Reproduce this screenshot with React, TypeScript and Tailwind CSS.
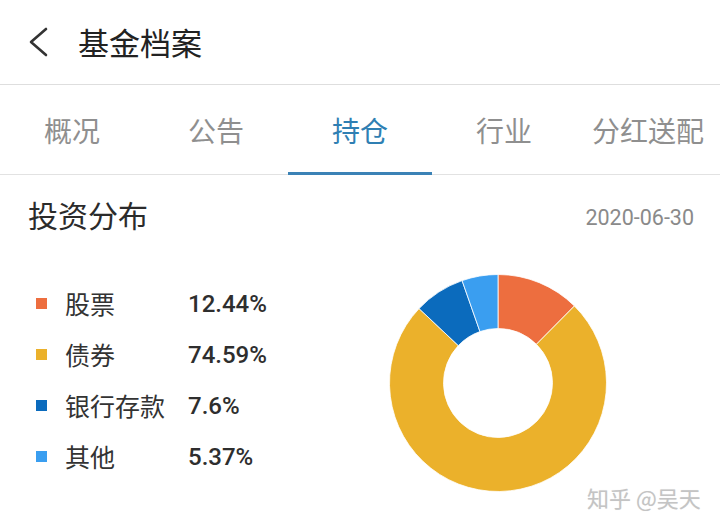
import React from "react";

const cjk = { fontFamily: '"Noto Sans CJK SC", "Noto Sans", sans-serif' };
const latin = { fontFamily: 'Roboto, "Noto Sans CJK SC", sans-serif' };

const data = [
  { label: "股票", value: "12.44%", v: 12.44, color: "#ed6e3f" },
  { label: "债券", value: "74.59%", v: 74.59, color: "#ebb12b" },
  { label: "银行存款", value: "7.6%", v: 7.6, color: "#0b6bbd" },
  { label: "其他", value: "5.37%", v: 5.37, color: "#3a9ef0" },
];

function arcPath(cx: number, cy: number, R: number, r: number, a0: number, a1: number) {
  const t0 = a0 * 2 * Math.PI - Math.PI / 2;
  const t1 = a1 * 2 * Math.PI - Math.PI / 2;
  const large = a1 - a0 > 0.5 ? 1 : 0;
  const p = (rad: number, t: number) => `${cx + rad * Math.cos(t)} ${cy + rad * Math.sin(t)}`;
  return `M ${p(R, t0)} A ${R} ${R} 0 ${large} 1 ${p(R, t1)} L ${p(r, t1)} A ${r} ${r} 0 ${large} 0 ${p(r, t0)} Z`;
}

function Donut() {
  const total = data.reduce((s, d) => s + d.v, 0);
  let acc = 0;
  return (
    <svg width="218" height="218" viewBox="0 0 218 218" className="shrink-0">
      {data.map((d) => {
        const a0 = acc / total;
        acc += d.v;
        const a1 = acc / total;
        return (
          <path
            key={d.label}
            d={arcPath(109, 109, 108.5, 54.5, a0, a1)}
            fill={d.color}
            stroke="#ffffff"
            strokeWidth="0.8"
          />
        );
      })}
    </svg>
  );
}

const tabs = ["概况", "公告", "持仓", "行业", "分红送配"];

export default function App() {
  return (
    <div className="relative w-[720px] h-[529px] bg-white overflow-hidden" style={cjk}>
      {/* Header */}
      <div className="flex items-center h-[85px] border-b border-[#dedede]">
        <svg width="24" height="32" viewBox="0 0 24 32" className="ml-[27px] -mt-[1px]">
          <path d="M19 3 L4 16 L19 29" fill="none" stroke="#333333" strokeWidth="2.6" strokeLinecap="round" strokeLinejoin="round" />
        </svg>
        <div className="ml-[27px] text-[31px] leading-none text-[#222222] -mt-[2px]">基金档案</div>
      </div>

      {/* Tabs */}
      <div className="flex h-[90px] border-b border-[#e2e2e2]">
        {tabs.map((t, i) => (
          <div key={t} className="relative flex-1 flex items-center justify-center">
            <span className={`text-[28px] leading-none ${i === 2 ? "text-[#2f7fb3]" : "text-[#8f8f8f]"}`}>{t}</span>
            {i === 2 && <div className="absolute left-0 right-0 -bottom-[1px] h-[3px] bg-[#3b82b6]" />}
          </div>
        ))}
      </div>

      {/* Section header */}
      <div className="flex items-start justify-between pt-[19px] px-[28px] pr-[26px] h-[65px]">
        <div className="text-[30px] leading-[40px] text-[#2b2b2b]">投资分布</div>
        <div className="text-[21.5px] leading-[48px] text-[#8a8a8a]" style={latin}>2020-06-30</div>
      </div>

      {/* Content */}
      <div className="flex">
        <div className="w-[389px] pl-[36px] pt-[38px] flex flex-col">
          {data.map((d) => (
            <div key={d.label} className="flex items-center h-[51px]">
              <div className="w-[11px] h-[11px]" style={{ backgroundColor: d.color }} />
              <div className="ml-[18px] w-[123px] text-[25px] leading-none text-[#333333]">{d.label}</div>
              <div className="text-[24px] leading-none font-medium text-[#2e2e2e]" style={latin}>{d.value}</div>
            </div>
          ))}
        </div>
        <div className="mt-[34px]">
          <Donut />
        </div>
      </div>

      {/* Watermark */}
      <div
        className="absolute left-[587px] top-[486px] text-[22px] leading-none text-[#c4c4c4]"
        style={{ ...cjk, textShadow: "0 0 1px #e8e8e8" }}
      >
        知乎 @吴天
      </div>
    </div>
  );
}
